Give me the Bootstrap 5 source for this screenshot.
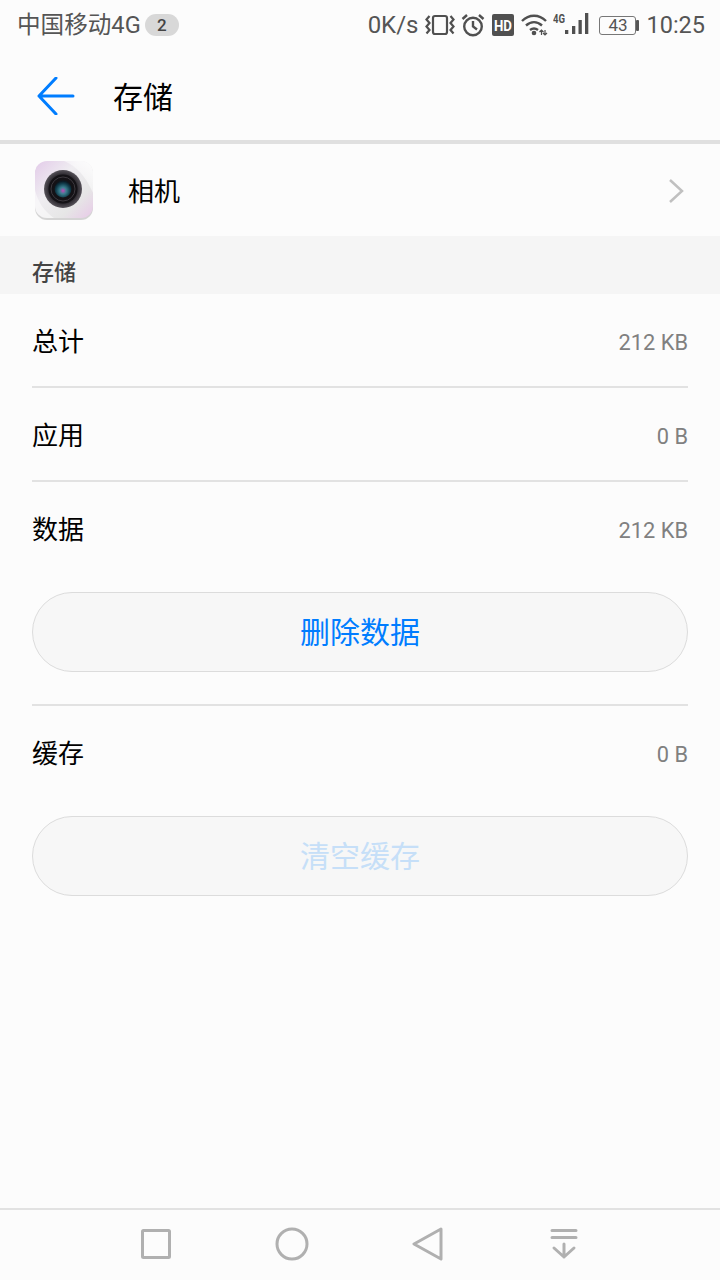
<!DOCTYPE html>
<html lang="zh-CN">
<head>
  <meta charset="UTF-8">
  <title>存储</title>
  <meta name="viewport" content="width=device-width, initial-scale=1">
  <link href="https://cdn.jsdelivr.net/npm/bootstrap@5.3.3/dist/css/bootstrap.min.css" rel="stylesheet">
  <style>
    body { background: #fcfcfc; font-family: Roboto, "Noto Sans CJK SC", sans-serif; color: #000; }
    .phone { width: 720px; height: 1280px; overflow: hidden; }
    .status-bar { height: 50px; padding: 0 15px 0 17px; color: #555; font-size: 24px; line-height: 50px; }
    .carrier { font-size: 23.6px; }
    .sim-count { width: 34px; height: 22px; margin-left: 4px; border-radius: 11px; background: #d8d8d8; color: #444; font-size: 17px; font-weight: 500; line-height: 22px; text-align: center; }
    .stat-icons svg { display: block; flex-shrink: 0; }
    .net-speed { margin-right: 7px; }
    .gap-6 { margin-left: 6px; }
    .gap-7 { margin-left: 7px; }
    .gap-5 { margin-left: 5px; }
    .battery-box { width: 37px; height: 19px; margin-left: 10px; border: 1.5px solid #777; border-radius: 3px; color: #555; font-size: 17px; line-height: 16px; text-align: center; }
    .battery-tip { width: 3px; height: 11px; margin-right: 7px; background: #555; border-radius: 1px; }
    .clock-text { font-size: 23.5px; }
    .tool-bar { height: 94px; border-bottom: 4px solid #e0e0e0; padding: 2px 0 0 37px; }
    .tool-title { margin-left: 38px; padding-top: 4px; font-size: 30px; line-height: 1; }
    .app-row { height: 92px; padding: 0 35px 0 34px; }
    .app-name { margin-left: 34px; padding-top: 4px; font-size: 26px; line-height: 1; }
    .chevron { margin-top: 2px; }
    .sec-head { height: 58px; padding: 23px 32px 0; background: #f5f5f5; color: #444; font-size: 22px; font-weight: 500; line-height: 27px; }
    .info-row { height: 94px; margin: 0 32px; font-size: 26px; }
    .info-row.ruled { padding-top: 4px; border-bottom: 2px solid #e2e2e2; }
    .info-row.open { height: 96px; margin-bottom: 14px; }
    .info-val { padding-top: 2px; color: #808080; font-size: 21.8px; }
    .pill-btn { width: 656px; height: 80px; margin: 0 32px; padding-top: 3px; border: 1px solid #dcdcdc; border-radius: 40px; background: #f7f7f7; color: #007dff; font-size: 30px; line-height: 1; }
    .pill-btn:disabled { color: #c6dff8; }
    .rule-line { height: 2px; margin: 32px 32px 0; background: #e2e2e2; }
    .nav-keys { height: 72px; padding-top: 17px; border-top: 2px solid #e2e2e2; }
    .nav-slot { width: 136px; }
  </style>
</head>
<body>
  <div class="phone d-flex flex-column">

    <!-- status bar -->
    <div class="status-bar d-flex align-items-center flex-shrink-0">
      <span class="carrier">中国移动4G</span>
      <span class="sim-count">2</span>
      <div class="stat-icons d-flex align-items-center ms-auto">
        <span class="net-speed">0K/s</span>
        <svg width="30" height="24" viewBox="0 0 30 24" fill="none" stroke="#505050" stroke-width="2.200">
          <rect x="8" y="3" width="14" height="18" rx="2"/>
          <path d="M4.500 3 1.500 6.500 4.500 10 1.500 13.500 4.500 17 1.500 20.500M25.500 3l3 3.500-3 3.500 3 3.500-3 3.500 3 3.500"/>
        </svg>
        <svg class="gap-6" width="24" height="24" viewBox="0 0 24 24" fill="none" stroke="#505050" stroke-width="2.400">
          <circle cx="12" cy="13.500" r="8.800"/>
          <path d="M12 8v5.500l4 3M1.500 6 6 2M22.500 6 18 2"/>
        </svg>
        <svg class="gap-7" width="22" height="22" viewBox="0 0 22 22">
          <rect width="22" height="22" rx="2" fill="#505050"/>
          <text x="11" y="16.500" text-anchor="middle" fill="#fff" font-family="Roboto, sans-serif" font-size="14" font-weight="700" textLength="18" lengthAdjust="spacingAndGlyphs">HD</text>
        </svg>
        <svg class="gap-7" width="27" height="24" viewBox="0 0 27 24" fill="none" stroke="#505050" stroke-width="2.400">
          <path d="M1 8c7-7 17-7 24 0M5 12.500c5-4.500 11-4.500 16 0M9 17c2.500-2 5.500-2 8 0"/>
          <circle cx="13" cy="20" r="2.300" fill="#505050" stroke="none"/>
          <path d="M20.500 22v-5M18.500 19l2-2 2 2M24 17v5M22 20l2 2 2-2" stroke-width="1.200"/>
        </svg>
        <svg class="gap-5" width="36" height="24" viewBox="0 0 36 24" fill="#505050">
          <text x="0" y="10" font-family="Roboto, sans-serif" font-size="12" font-weight="700" textLength="12" lengthAdjust="spacingAndGlyphs">4G</text>
          <rect x="12" y="17" width="3.300" height="4"/>
          <rect x="19" y="13" width="3.300" height="8"/>
          <rect x="25.500" y="7" width="3.300" height="14"/>
          <rect x="32" y="0" width="3.300" height="21"/>
        </svg>
        <div class="battery-box">43</div>
        <div class="battery-tip"></div>
        <span class="clock-text">10:25</span>
      </div>
    </div>

    <!-- title -->
    <div class="tool-bar d-flex align-items-center flex-shrink-0">
      <svg width="38" height="38" viewBox="0 0 38 38" fill="none" stroke="#007dff" stroke-width="3" stroke-linecap="round" stroke-linejoin="round">
        <path d="M19 1 2 19l17 18M2 19h34"/>
      </svg>
      <span class="tool-title">存储</span>
    </div>

    <!-- app -->
    <div class="app-row d-flex align-items-center flex-shrink-0">
      <svg width="60" height="60" viewBox="0 0 60 60">
        <defs>
          <clipPath id="tileClip"><rect x="1" y="1" width="58" height="57" rx="12"/></clipPath>
          <linearGradient id="tileBg" x1="0" y1="0" x2="1" y2="1">
            <stop offset="0" stop-color="#e3cbe9"/>
            <stop offset=".38" stop-color="#efedf1"/>
            <stop offset=".72" stop-color="#e6e6e6"/>
            <stop offset="1" stop-color="#e8c9e8"/>
          </linearGradient>
          <linearGradient id="cornerShine" x1="1" y1="0" x2="0" y2="1">
            <stop offset="0" stop-color="#fff" stop-opacity=".9"/>
            <stop offset="1" stop-color="#fff" stop-opacity="0"/>
          </linearGradient>
          <radialGradient id="lensBody">
            <stop offset=".75" stop-color="#2c292f"/>
            <stop offset="1" stop-color="#57535a"/>
          </radialGradient>
          <radialGradient id="lensGlass" cy=".6" r=".55">
            <stop offset="0" stop-color="#c34ab8"/>
            <stop offset=".35" stop-color="#3c7f90"/>
            <stop offset=".75" stop-color="#123f4e"/>
            <stop offset="1" stop-color="#0a1a24"/>
          </radialGradient>
        </defs>
        <rect x="1" y="2" width="58" height="58" rx="12" fill="#d4d4d4"/>
        <rect x="1" y="1" width="58" height="57" rx="12" fill="url(#tileBg)"/>
        <g clip-path="url(#tileClip)">
          <path d="M30 1h30v34C52 17 44 7 30 1Z" fill="url(#cornerShine)"/>
          <path d="M1 58V30c3 12 9 21 19 28Z" fill="#fff" opacity=".5"/>
        </g>
        <circle cx="29" cy="29" r="19" fill="url(#lensBody)"/>
        <circle cx="29" cy="29" r="14.500" fill="#141216"/>
        <circle cx="29" cy="29" r="12" fill="none" stroke="#3c383e" stroke-width="1"/>
        <circle cx="29" cy="29" r="8.500" fill="url(#lensGlass)"/>
      </svg>
      <span class="app-name">相机</span>
      <svg class="chevron ms-auto" width="17" height="26" viewBox="0 0 17 26" fill="none" stroke="#c0c0c0" stroke-width="2.500">
        <path d="m2 2 12 11L2 24"/>
      </svg>
    </div>

    <div class="sec-head flex-shrink-0">存储</div>

    <div class="info-row ruled d-flex align-items-center justify-content-between flex-shrink-0"><span>总计</span><span class="info-val">212 KB</span></div>
    <div class="info-row ruled d-flex align-items-center justify-content-between flex-shrink-0"><span>应用</span><span class="info-val">0 B</span></div>
    <div class="info-row open d-flex align-items-center justify-content-between flex-shrink-0"><span>数据</span><span class="info-val">212 KB</span></div>

    <button type="button" class="pill-btn flex-shrink-0">删除数据</button>
    <div class="rule-line flex-shrink-0"></div>

    <div class="info-row open d-flex align-items-center justify-content-between flex-shrink-0"><span>缓存</span><span class="info-val">0 B</span></div>
    <button type="button" class="pill-btn flex-shrink-0" disabled>清空缓存</button>

    <!-- nav keys -->
    <div class="nav-keys mt-auto d-flex justify-content-center align-items-start flex-shrink-0">
      <div class="nav-slot d-flex justify-content-center">
        <svg width="32" height="34" viewBox="0 0 32 34" fill="none" stroke="#b0b0b0" stroke-width="3" stroke-linejoin="round"><rect x="2.500" y="3.500" width="27" height="27" rx="1"/></svg>
      </div>
      <div class="nav-slot d-flex justify-content-center">
        <svg width="34" height="34" viewBox="0 0 34 34" fill="none" stroke="#b0b0b0" stroke-width="3"><circle cx="17" cy="17" r="15"/></svg>
      </div>
      <div class="nav-slot d-flex justify-content-center">
        <svg width="32" height="34" viewBox="0 0 32 34" fill="none" stroke="#b0b0b0" stroke-width="3" stroke-linejoin="round"><path d="M29 2 2 17l27 15Z"/></svg>
      </div>
      <div class="nav-slot d-flex justify-content-center">
        <svg width="30" height="34" viewBox="0 0 30 34" fill="none" stroke="#b0b0b0" stroke-width="3" stroke-linecap="round" stroke-linejoin="round"><path d="M3 3.500h24M3 10.500h24M15 17v13M5 21l10 9 10-9"/></svg>
      </div>
    </div>
  </div>

  <script src="https://cdn.jsdelivr.net/npm/bootstrap@5.3.3/dist/js/bootstrap.bundle.min.js"></script>
</body>
</html>
